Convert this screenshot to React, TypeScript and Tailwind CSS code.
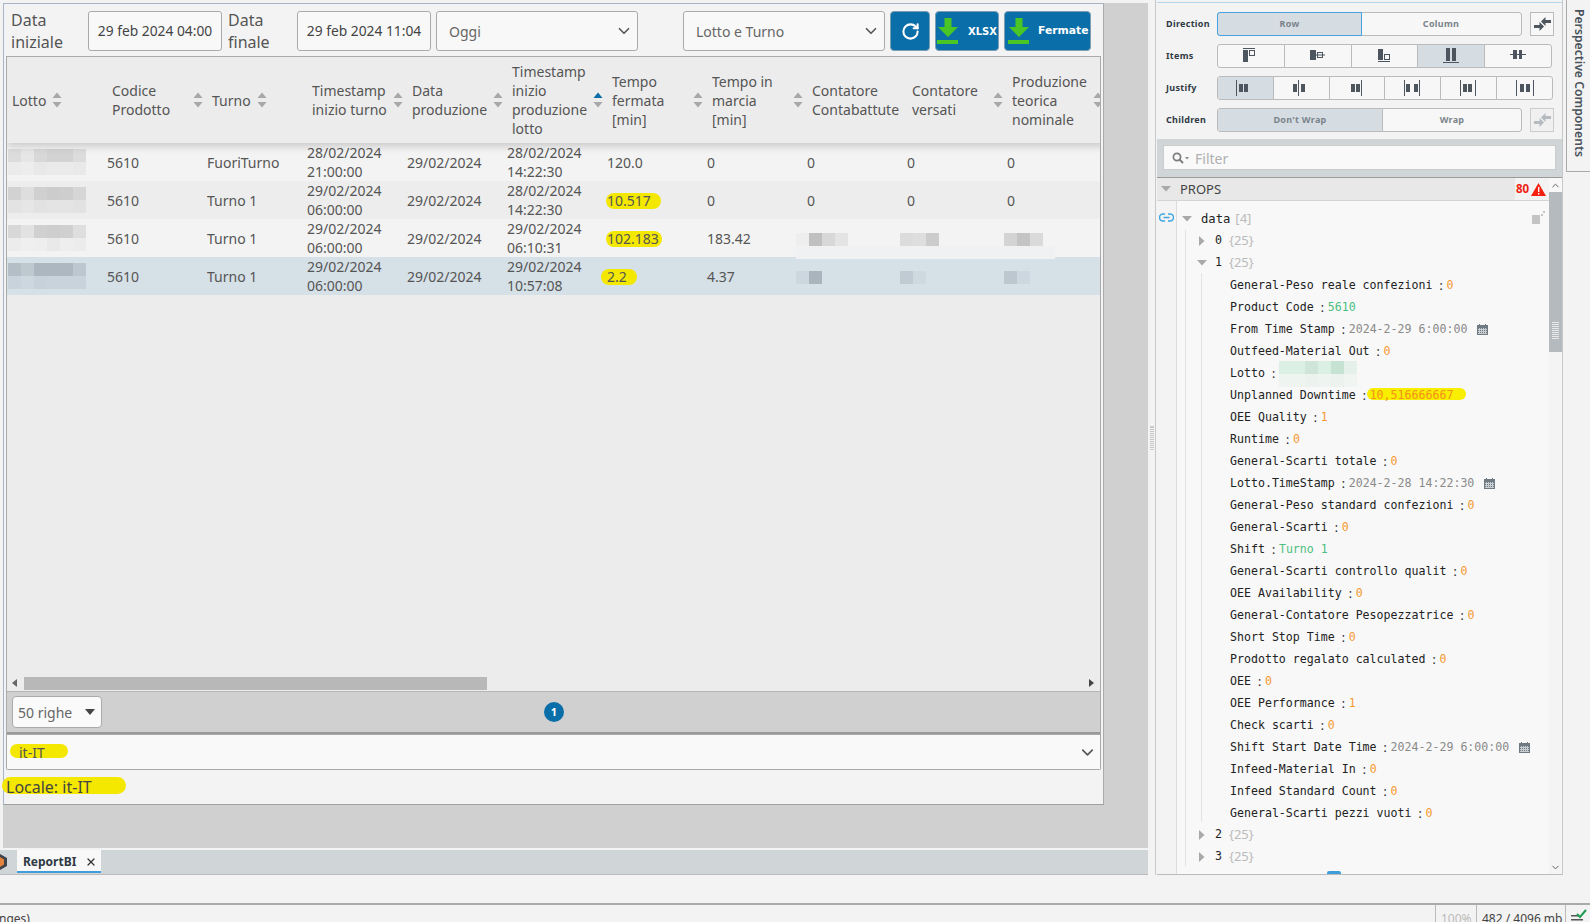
import { RotateCw, ChevronDown, ChevronUp, X } from 'lucide-react';

const COLUMNS = [
  { label: 'Lotto', sort: true },
  { label: 'Codice Prodotto', sort: true },
  { label: 'Turno', sort: true },
  { label: 'Timestamp inizio turno', sort: true },
  { label: 'Data produzione', sort: true },
  { label: 'Timestamp inizio produzione lotto', sort: true, active: true },
  { label: 'Tempo fermata [min]', sort: true },
  { label: 'Tempo in marcia [min]', sort: true },
  { label: 'Contatore Contabattute', sort: false },
  { label: 'Contatore versati', sort: true },
  { label: 'Produzione teorica nominale', sort: true },
];

const ROWS = [
  {
    bg: 'bg-[#f3f3f3]', turno: 'FuoriTurno', start: ['28/02/2024', '21:00:00'], lot: ['28/02/2024', '14:22:30'],
    fermata: '120.0', marcia: '0',
    mosaic: [['#dcdcdc', '#e6e6e6', '#d8d8d8', '#d3d3d3', '#d3d3d3', '#dcdcdc'], ['#ebebeb', '#ededed', '#e8e8e8', '#ebebeb', '#ebebeb', '#e9e9e9']],
  },
  {
    bg: 'bg-[#ededed]', turno: 'Turno 1', start: ['29/02/2024', '06:00:00'], lot: ['28/02/2024', '14:22:30'],
    fermata: '10.517', marcia: '0', mark: '-left-[1px] w-[55px]',
    mosaic: [['#d2d2d2', '#dedede', '#d0d0d0', '#cccccc', '#cecece', '#d6d6d6'], ['#e3e3e3', '#e6e6e6', '#e2e2e2', '#e4e4e4', '#e4e4e4', '#e2e2e2']],
  },
  {
    bg: 'bg-[#f3f3f3]', turno: 'Turno 1', start: ['29/02/2024', '06:00:00'], lot: ['29/02/2024', '06:10:31'],
    fermata: '102.183', marcia: '183.42', mark: '-left-[1px] w-[56px]',
    mosaic: [['#d8d8d8', '#e2e2e2', '#d0d0d0', '#cecece', '#d0d0d0', '#dedede'], ['#ececec', '#efefef', '#eeeeee', '#e9e9e9', '#eeeeee', '#ececec']],
  },
  {
    bg: 'bg-[#d5e0e7]', turno: 'Turno 1', start: ['29/02/2024', '06:00:00'], lot: ['29/02/2024', '10:57:08'],
    fermata: '2.2', marcia: '4.37', mark: '-left-[6px] w-[36px]',
    mosaic: [['#b4bec6', '#bec8cf', '#adb7bf', '#adb7bf', '#aeb8c0', '#bcc7cf'], ['#c8d3db', '#ccd7df', '#c6d1d9', '#c8d3db', '#c8d3db', '#c8d3db']],
  },
];

const COUNTERS_ROW3 = [
  { ml: '-ml-[11px]', cells: ['#eeeeee', '#c0c0c0', '#d8d8d8', '#e4e4e4'] },
  { ml: '-ml-[7px]', cells: ['#dcdcdc', '#dedede', '#cccccc'] },
  { ml: '-ml-[3px]', cells: ['#d4d4d4', '#c4c4c4', '#dadada'] },
];
const COUNTERS_ROW4 = [
  { ml: '-ml-[11px]', cells: ['#ccd7df', '#aab4bc'] },
  { ml: '-ml-[7px]', cells: ['#c0cbd3', '#cfd9e0'] },
  { ml: '-ml-[3px]', cells: ['#bcc7cf', '#ccd7df'] },
];

type TreeValue = { name: string; value: string; kind: 'num' | 'str' | 'date' | 'blur' | 'mark' };

const PROPS: TreeValue[] = [
  { name: 'General-Peso reale confezioni', value: '0', kind: 'num' },
  { name: 'Product Code', value: '5610', kind: 'str' },
  { name: 'From Time Stamp', value: '2024-2-29 6:00:00', kind: 'date' },
  { name: 'Outfeed-Material Out', value: '0', kind: 'num' },
  { name: 'Lotto', value: '', kind: 'blur' },
  { name: 'Unplanned Downtime', value: '10,516666667', kind: 'mark' },
  { name: 'OEE Quality', value: '1', kind: 'num' },
  { name: 'Runtime', value: '0', kind: 'num' },
  { name: 'General-Scarti totale', value: '0', kind: 'num' },
  { name: 'Lotto.TimeStamp', value: '2024-2-28 14:22:30', kind: 'date' },
  { name: 'General-Peso standard confezioni', value: '0', kind: 'num' },
  { name: 'General-Scarti', value: '0', kind: 'num' },
  { name: 'Shift', value: 'Turno 1', kind: 'str' },
  { name: 'General-Scarti controllo qualit', value: '0', kind: 'num' },
  { name: 'OEE Availability', value: '0', kind: 'num' },
  { name: 'General-Contatore Pesopezzatrice', value: '0', kind: 'num' },
  { name: 'Short Stop Time', value: '0', kind: 'num' },
  { name: 'Prodotto regalato calculated', value: '0', kind: 'num' },
  { name: 'OEE', value: '0', kind: 'num' },
  { name: 'OEE Performance', value: '1', kind: 'num' },
  { name: 'Check scarti', value: '0', kind: 'num' },
  { name: 'Shift Start Date Time', value: '2024-2-29 6:00:00', kind: 'date' },
  { name: 'Infeed-Material In', value: '0', kind: 'num' },
  { name: 'Infeed Standard Count', value: '0', kind: 'num' },
  { name: 'General-Scarti pezzi vuoti', value: '0', kind: 'num' },
];

function Mosaic({ rows, cell = 13 }: { rows: string[][]; cell?: number }) {
  return (
    <div className="flex flex-col">
      {rows.map((row, i) => (
        <div key={i} className="flex">
          {row.map((c, j) => (
            <div key={j} style={{ backgroundColor: c, width: cell, height: cell }} />
          ))}
        </div>
      ))}
    </div>
  );
}

function SortIcon({ active }: { active?: boolean }) {
  return (
    <svg width="10" height="16" viewBox="0 0 10 16" className="shrink-0">
      <path d="M5 0.5 L9.5 6 H0.5 Z" fill={active ? '#0b6ea6' : '#a8a8a8'} />
      <path d="M5 15.5 L9.5 10 H0.5 Z" fill="#a8a8a8" />
    </svg>
  );
}

function DownloadIcon() {
  return (
    <svg width="22" height="26" viewBox="0 0 22 26" className="shrink-0">
      <path d="M7.5 0 H14.5 V9 H21 L11 19 L1 9 H7.5 Z" fill="#4ac526" />
      <rect x="0" y="22" width="21" height="4" fill="#4ac526" />
    </svg>
  );
}

function SwapIcon({ dim }: { dim?: boolean }) {
  return (
    <svg width="17" height="14" viewBox="0 0 17 14" fill={dim ? '#b4babf' : '#4d565e'}>
      <path d="M7 4.5 L11.5 0 V3 H17 V6 H11.5 V9 Z" />
      <path d="M10 9.5 L5.5 5 V8 H0 V11 H5.5 V14 Z" />
    </svg>
  );
}

function ItemsIcon({ kind }: { kind: number }) {
  const c = '#4d565e';
  return (
    <svg width="20" height="16" viewBox="0 0 20 16">
      {kind === 0 && (
        <>
          <rect x="2" y="0" width="12" height="1" fill={c} />
          <rect x="2" y="2" width="5" height="12" fill={c} />
          <rect x="8.5" y="2.5" width="5" height="5" fill="none" stroke={c} />
        </>
      )}
      {kind === 1 && (
        <>
          <rect x="2" y="2" width="6" height="10" fill={c} />
          <rect x="9.5" y="4.5" width="5" height="5" fill="none" stroke={c} />
          <rect x="8" y="6.5" width="9" height="1" fill={c} />
        </>
      )}
      {kind === 2 && (
        <>
          <rect x="4" y="1" width="5" height="11" fill={c} />
          <rect x="10.5" y="6.5" width="5" height="5" fill="none" stroke={c} />
          <rect x="4" y="13" width="12" height="1" fill={c} />
        </>
      )}
      {kind === 3 && (
        <>
          <rect x="5" y="0" width="4" height="13" fill={c} />
          <rect x="11" y="0" width="4" height="13" fill={c} />
          <rect x="2" y="14" width="16" height="1" fill={c} />
        </>
      )}
      {kind === 4 && (
        <>
          <rect x="2" y="6" width="16" height="1" fill={c} />
          <rect x="5" y="2" width="4" height="9" fill={c} />
          <rect x="11" y="2" width="3" height="9" fill={c} />
        </>
      )}
    </svg>
  );
}

function JustifyIcon({ kind }: { kind: number }) {
  const c = '#4d565e';
  const layouts = [
    { lines: [1], bars: [4, 9] },
    { lines: [7], bars: [2, 10] },
    { lines: [14], bars: [4, 9] },
    { lines: [1, 16], bars: [3, 11] },
    { lines: [1, 16], bars: [4, 9] },
    { lines: [1, 18], bars: [5, 11] },
  ];
  const l = layouts[kind];
  return (
    <svg width="20" height="16" viewBox="0 0 20 16">
      {l.lines.map((x) => (
        <rect key={x} x={x} y="0" width="1" height="16" fill={c} />
      ))}
      {l.bars.map((x) => (
        <rect key={x} x={x} y="4" width="4" height="8" fill={c} />
      ))}
    </svg>
  );
}

function Calendar() {
  return (
    <svg width="11" height="11" viewBox="0 0 11 11" className="ml-[10px] shrink-0">
      <rect x="0" y="1" width="11" height="10" fill="#6f7a83" />
      <rect x="2" y="0" width="1" height="2" fill="#6f7a83" />
      <rect x="8" y="0" width="1" height="2" fill="#6f7a83" />
      <rect x="1" y="4" width="9" height="6" fill="#c9ced2" />
      {[1, 3, 5, 7, 9].map((x) =>
        [4, 6, 8].map((y) => <rect key={`${x}-${y}`} x={x} y={y} width="1" height="1" fill="#6f7a83" />)
      )}
    </svg>
  );
}

function TriDown({ className }: { className?: string }) {
  return (
    <svg width="10" height="6" viewBox="0 0 10 6" className={`shrink-0 ${className ?? ''}`}>
      <path d="M0 0 H10 L5 5.5 Z" fill="#a9a9a9" />
    </svg>
  );
}

function TriRight({ className }: { className?: string }) {
  return (
    <svg width="6" height="10" viewBox="0 0 6 10" className={`shrink-0 ${className ?? ''}`}>
      <path d="M0 0 V10 L5.5 5 Z" fill="#a9a9a9" />
    </svg>
  );
}

function HeaderCell({ label, sort, active }: { label: string; sort: boolean; active?: boolean }) {
  return (
    <div className="w-[100px] shrink-0 flex items-center pl-[5px] pr-[4px] overflow-hidden">
      <span className="leading-[19px] text-[14px] text-[#555]">{label}</span>
      {sort && <div className="ml-[6px] shrink-0"><SortIcon active={active} /></div>}
    </div>
  );
}

function BodyCell({ children }: { children: React.ReactNode }) {
  return <div className="w-[100px] shrink-0 text-[14px] leading-[19px] text-[#555]">{children}</div>;
}

export default function App() {
  return (
    <div
      className="w-[1590px] h-[922px] overflow-hidden flex flex-col bg-[#f3f3f3]"
      style={{ fontFamily: '"Noto Sans", sans-serif' }}
    >
      <div className="flex h-[903px] shrink-0">
        {/* Designer canvas */}
        <div className="w-[1148px] shrink-0 flex flex-col">
          <div className="h-[848px] shrink-0 bg-[#d0d0d0] flex flex-col">
            <div className="h-[3px] bg-[#f3f3f3] shrink-0" />
            <div className="flex-1 flex">
              <div className="w-[3px] bg-[#f3f3f3] shrink-0" />
              <div className="w-[1101px] h-fit shrink-0 border-l border-t border-r border-b border-[#a9b4c8] border-r-[#aaa] border-b-[#a0a0a0] bg-[#f3f3f3] flex flex-col">
                {/* Filters */}
                <div className="h-[52px] shrink-0 flex items-start pt-[7px] text-[#555]">
                  <div className="ml-[7px] w-[77px] text-[16px] leading-[22px] -mt-[2px] shrink-0">Data<br />iniziale</div>
                  <div className="w-[134px] h-[40px] pt-[1px] shrink-0 border border-[#aaa] rounded-[3px] bg-[#f8f8f8] flex items-center justify-center text-[13.8px] text-[#444]">29 feb 2024 04:00</div>
                  <div className="ml-[6px] w-[69px] text-[16px] leading-[22px] -mt-[2px] shrink-0">Data<br />finale</div>
                  <div className="w-[134px] h-[40px] pt-[1px] shrink-0 border border-[#aaa] rounded-[3px] bg-[#f8f8f8] flex items-center justify-center text-[13.8px] text-[#444]">29 feb 2024 11:04</div>
                  <div className="ml-[5px] w-[202px] h-[40px] shrink-0 border border-[#aaa] rounded-[3px] bg-[#f8f8f8] flex items-center justify-between pl-[12px] pr-[4px] text-[14px] text-[#666]">
                    Oggi
                    <ChevronDown size={18} strokeWidth={2.2} color="#555" />
                  </div>
                  <div className="ml-[45px] w-[202px] h-[40px] shrink-0 border border-[#aaa] rounded-[3px] bg-[#f8f8f8] flex items-center justify-between pl-[12px] pr-[4px] text-[14px] text-[#666]">
                    Lotto e Turno
                    <ChevronDown size={18} strokeWidth={2.2} color="#555" />
                  </div>
                  <div className="ml-[5px] w-[40px] h-[40px] shrink-0 rounded-[4px] border border-[#7c9db3] bg-[#0a6ea8] flex items-center justify-center">
                    <RotateCw size={19} strokeWidth={2.6} color="#fff" />
                  </div>
                  <div className="ml-[5px] w-[64px] h-[40px] shrink-0 rounded-[4px] border border-[#7c9db3] bg-[#0a6ea8] flex items-center pl-[1px] text-[#fff]">
                    <DownloadIcon />
                    <span className="ml-[9px] pt-[1px] font-bold text-[10px]" style={{ fontFamily: '"DejaVu Sans", sans-serif' }}>XLSX</span>
                  </div>
                  <div className="ml-[5px] w-[87px] h-[40px] shrink-0 rounded-[4px] border border-[#7c9db3] bg-[#0a6ea8] flex items-center pl-[3px] text-[#fff]">
                    <DownloadIcon />
                    <span className="ml-[8px] pt-[1px] font-bold text-[10.8px]" style={{ fontFamily: '"DejaVu Sans", sans-serif' }}>Fermate</span>
                  </div>
                </div>

                {/* Table */}
                <div className="ml-[2px] w-[1095px] h-[679px] shrink-0 border border-[#aaa] bg-[#ececec] flex flex-col overflow-hidden">
                  <div className="h-[86px] shrink-0 flex w-[1100px] relative z-10 shadow-[0_3px_8px_rgba(0,0,0,0.18)] bg-[#ececec]">
                    {COLUMNS.map((c) => (
                      <HeaderCell key={c.label} label={c.label} sort={c.sort} active={c.active} />
                    ))}
                  </div>
                  <div className="h-[152px] shrink-0 flex flex-col">
                    {ROWS.map((r, i) => (
                      <div key={i} className={`h-[38px] shrink-0 flex items-center w-[1100px] relative ${r.bg}`}>
                        <BodyCell>
                          <div className="ml-[1px]"><Mosaic rows={r.mosaic} /></div>
                        </BodyCell>
                        <BodyCell>5610</BodyCell>
                        <BodyCell>{r.turno}</BodyCell>
                        <BodyCell>{r.start[0]}<br />{r.start[1]}</BodyCell>
                        <BodyCell>29/02/2024</BodyCell>
                        <BodyCell>{r.lot[0]}<br />{r.lot[1]}</BodyCell>
                        <BodyCell>
                          <span className="relative inline-block">
                            {r.mark && (
                              <span className={`absolute top-[2px] bottom-[1px] rounded-full bg-[#f4e800] ${r.mark}`} />
                            )}
                            <span className="relative">{r.fermata}</span>
                          </span>
                        </BodyCell>
                        <BodyCell>{r.marcia}</BodyCell>
                        {i < 2 && (
                          <>
                            <BodyCell>0</BodyCell>
                            <BodyCell>0</BodyCell>
                            <BodyCell>0</BodyCell>
                          </>
                        )}
                        {i === 2 &&
                          COUNTERS_ROW3.map((m) => (
                            <BodyCell key={m.ml}>
                              <div className={`${m.ml} pt-[3px]`}>
                                <Mosaic rows={[m.cells]} />
                              </div>
                            </BodyCell>
                          ))}
                        {i === 3 &&
                          COUNTERS_ROW4.map((m) => (
                            <BodyCell key={m.ml}>
                              <div className={`${m.ml} pt-[3px]`}>
                                <Mosaic rows={[m.cells]} />
                              </div>
                            </BodyCell>
                          ))}
                        {i === 2 && <div className="absolute left-[789px] top-[27px] w-[259px] h-[13px] z-[1] bg-[#f0f1f3]" />}
                      </div>
                    ))}
                  </div>
                  <div className="flex-1" />
                  {/* Horizontal scrollbar */}
                  <div className="h-[14px] shrink-0 flex items-center">
                    <svg width="6" height="8" viewBox="0 0 6 8" className="ml-[5px] shrink-0"><path d="M5 0 V8 L0 4 Z" fill="#666" /></svg>
                    <div className="ml-[6px] w-[463px] h-[13px] bg-[#b8b8b8]" />
                    <div className="flex-1" />
                    <svg width="6" height="8" viewBox="0 0 6 8" className="mr-[5px] shrink-0"><path d="M0 0 V8 L5 4 Z" fill="#444" /></svg>
                  </div>
                  {/* Pager */}
                  <div className="h-[43px] shrink-0 mt-[1px] border-t border-[#b5b5b5] border-b-2 border-b-[#999] bg-[#d0d0d0] flex items-center relative">
                    <div className="ml-[5px] w-[90px] h-[32px] bg-[#fafafa] border border-[#aaa] rounded-[4px] flex items-center justify-between pl-[5px] pr-[6px] text-[14px] text-[#666]">
                      50 righe
                      <svg width="10" height="6" viewBox="0 0 10 6"><path d="M0 0 H10 L5 6 Z" fill="#444" /></svg>
                    </div>
                    <div className="ml-[442px] w-[20px] h-[20px] rounded-full bg-[#0a6ea8] text-[#fff] text-[11px] font-bold flex items-center justify-center">1</div>
                  </div>
                </div>

                {/* Locale dropdown */}
                <div className="ml-[2px] w-[1095px] h-[35px] pt-[1px] shrink-0 border border-[#aaa] border-t-0 rounded-b-[2px] bg-[#f9f9f9] flex items-center justify-between pl-[12px] pr-[3px] text-[14px] text-[#555]">
                  <span className="relative">
                    <span className="absolute -left-[9px] top-[2px] w-[58px] h-[14px] rounded-full bg-[#f4e800]" />
                    <span className="relative">it-IT</span>
                  </span>
                  <ChevronDown size={19} strokeWidth={2} color="#555" />
                </div>
                <div className="h-[34px] pb-[1px] shrink-0 flex items-center pl-[2px] text-[16px] text-[#444]">
                  <span className="relative">
                    <span className="absolute -left-[4px] top-[2px] w-[124px] h-[17px] rounded-full bg-[#f4e800]" />
                    <span className="relative">Locale: it-IT</span>
                  </span>
                </div>
              </div>
            </div>
          </div>
          {/* Tab strip */}
          <div className="h-[27px] shrink-0 bg-[#d0d5d8] border-t-2 border-t-[#f3f3f3] border-b border-b-[#bbb] flex items-start">
            <div className="w-[17px] h-[23px] flex items-center overflow-hidden shrink-0">
              <svg width="16" height="16" viewBox="0 0 16 16" className="-ml-[8px] shrink-0">
                <path d="M8 0 L15 4 V12 L8 16 L1 12 V4 Z" fill="#3f444a" />
                <path d="M8 3 L12 5.5 V10.5 L8 13 Z" fill="#e4843a" />
              </svg>
            </div>
            <div className="w-[84px] h-[23px] bg-[#f8f8f8] border-b-2 border-b-[#3f9ddc] flex items-center pl-[6px] shrink-0">
              <span className="text-[12px] font-bold text-[#2f3a44] w-[62px] pt-[2px]">ReportBI</span>
              <X size={12} strokeWidth={2.4} color="#333" className="mt-[2px]" />
            </div>
          </div>
        </div>

        {/* Splitter */}
        <div className="w-[7px] shrink-0 h-[875px] flex items-center justify-center">
          <div className="w-[4px] h-[24px] border-y border-[#ccc] bg-[repeating-linear-gradient(#c4c4c4_0,#c4c4c4_1px,transparent_1px,transparent_2px)]" />
        </div>

        {/* Property editor */}
        <div className="w-[408px] h-[875px] shrink-0 border-l border-r border-[#c8c8c8] pl-[1px] flex flex-col bg-[#f3f3f3] overflow-hidden">
          <div className="h-[139px] shrink-0 pt-[2px] flex flex-col">
            <div className="h-[1px] bg-[#b5d5ec] shrink-0" />
            <div className="pt-[9px] flex flex-col gap-[8px]">
              <div className="flex items-center h-[24px]">
                <span className="ml-[9px] w-[51px] text-[9px] font-bold tracking-[0.3px] text-[#2f3a44]">Direction</span>
                <div className="w-[305px] h-[24px] flex border border-[#bbb] rounded-[3px] text-[9px] font-bold tracking-[0.3px] text-[#7b848b] bg-[#f7f7f7]">
                  <div className="w-[145px] bg-[#d5dce2] border border-[#45a2e0] -m-[1px] rounded-l-[3px] flex items-center justify-center">Row</div>
                  <div className="flex-1 flex items-center justify-center">Column</div>
                </div>
                <div className="ml-[8px] w-[24px] h-[24px] border border-[#bbb] bg-[#f7f7f7] flex items-center justify-center"><SwapIcon /></div>
              </div>
              <div className="flex items-center h-[24px]">
                <span className="ml-[9px] w-[51px] text-[9px] font-bold tracking-[0.3px] text-[#2f3a44]">Items</span>
                <div className="w-[335px] h-[24px] flex border border-[#bbb] rounded-[3px] overflow-hidden bg-[#f7f7f7]">
                  {[0, 1, 2, 3, 4].map((k) => (
                    <div key={k} className={`flex-1 flex items-center justify-center border-r border-[#bbb] last:border-r-0 ${k === 3 ? 'bg-[#d5dce2]' : ''}`}>
                      <ItemsIcon kind={k} />
                    </div>
                  ))}
                </div>
              </div>
              <div className="flex items-center h-[24px]">
                <span className="ml-[9px] w-[51px] text-[9px] font-bold tracking-[0.3px] text-[#2f3a44]">Justify</span>
                <div className="w-[336px] h-[24px] flex border border-[#bbb] rounded-[3px] overflow-hidden bg-[#f7f7f7]">
                  {[0, 1, 2, 3, 4, 5].map((k) => (
                    <div key={k} className={`flex-1 flex items-center justify-center border-r border-[#bbb] last:border-r-0 ${k === 0 ? 'bg-[#d5dce2]' : ''}`}>
                      <JustifyIcon kind={k} />
                    </div>
                  ))}
                </div>
              </div>
              <div className="flex items-center h-[24px]">
                <span className="ml-[9px] w-[51px] text-[9px] font-bold tracking-[0.3px] text-[#2f3a44]">Children</span>
                <div className="w-[305px] h-[24px] flex border border-[#bbb] rounded-[3px] overflow-hidden text-[9px] font-bold tracking-[0.3px] text-[#7b848b] bg-[#f7f7f7]">
                  <div className="w-[165px] bg-[#d5dce2] border-r border-[#bbb] flex items-center justify-center">Don't Wrap</div>
                  <div className="flex-1 flex items-center justify-center">Wrap</div>
                </div>
                <div className="ml-[8px] w-[24px] h-[24px] border border-[#ccc] bg-[#f0f0f0] flex items-center justify-center"><SwapIcon dim /></div>
              </div>
            </div>
          </div>

          {/* Filter band */}
          <div className="h-[39px] shrink-0 bg-[#d0d5d8] border-b border-[#999] pt-[6px] pl-[6px]">
            <div className="w-[393px] h-[25px] pt-[1px] bg-[#f9f9f9] border border-[#ccc] flex items-center pl-[8px] text-[14px] text-[#b0b0b0]">
              <svg width="18" height="12" viewBox="0 0 18 12" className="mr-[5px]">
                <circle cx="5" cy="5" r="3.6" fill="none" stroke="#7d7d7d" strokeWidth="1.7" />
                <path d="M7.5 7.5 L11 11" stroke="#7d7d7d" strokeWidth="2" />
                <path d="M13 5 H17 L15 7.5 Z" fill="#8a8a8a" />
              </svg>
              Filter
            </div>
          </div>

          {/* Props */}
          <div className="flex-1 flex min-h-0">
            <div className="w-[392px] shrink-0 flex flex-col border-b border-[#bbb]">
              <div className="h-[23px] shrink-0 bg-[#e8e8e8] border-b border-[#d4d4d4] flex items-center text-[13px] text-[#444]">
                <TriDown className="ml-[4px]" />
                <span className="ml-[9px] pt-[2px]">PROPS</span>
                <span className="ml-auto w-[34px] h-full bg-[#f3f3f3] flex items-center pl-[1px]">
                  <span className="text-[11.5px] font-bold text-[#f01d10]">80</span>
                  <svg width="15" height="13" viewBox="0 0 15 13" className="ml-[2px]">
                    <path d="M7.5 0 L15 13 H0 Z" fill="#f5200f" />
                    <rect x="7" y="4" width="1.4" height="5" fill="#fff" />
                    <rect x="7" y="10" width="1.4" height="1.5" fill="#fff" />
                  </svg>
                </span>
              </div>
              <div className="flex-1 flex relative bg-[#f8f8f8] overflow-hidden">
                <div className="w-[20px] shrink-0 bg-[#f3f3f3] border-r border-[#ddd] pt-[12px] pl-[2px]">
                  <svg width="15" height="9" viewBox="0 0 15 9" fill="none" stroke="#3ea6e2" strokeWidth="1.5">
                    <path d="M6 1 H4 A3.5 3.5 0 0 0 4 8 H6" />
                    <path d="M9 1 H11 A3.5 3.5 0 0 1 11 8 H9" />
                    <path d="M4.5 4.5 H10.5" />
                  </svg>
                </div>
                {/* guide lines of the tree */}
                <div className="absolute left-[28px] top-[29px] bottom-[8px] w-[1px] bg-[#e4e4e4]" />
                <div className="absolute left-[44px] top-[72px] h-[549px] w-[1px] bg-[#e4e4e4]" />
                <svg width="13" height="13" viewBox="0 0 13 13" className="absolute right-[4px] top-[10px]" fill="#c4c4c4">
                  <path d="M0 4 H8 V13 H0 Z" />
                  <rect x="9" y="3" width="2" height="2" />
                  <rect x="11" y="0" width="2" height="2" />
                </svg>
                <div className="flex-1 pt-[7px] font-normal text-[11.6px] text-[#222]" style={{ fontFamily: '"DejaVu Sans Mono", monospace' }}>
                  <div className="h-[22px] flex items-center pl-[5px]">
                    <TriDown />
                    <span className="ml-[9px] text-[12.2px]">data</span>
                    <span className="ml-[5px] text-[#bbb] text-[13px]" style={{ fontFamily: '"Noto Sans", sans-serif' }}>[4]</span>
                  </div>
                  <div className="h-[22px] flex items-center pl-[22px]">
                    <TriRight />
                    <span className="ml-[10px]">0</span>
                    <span className="ml-[7px] text-[#bbb] text-[13px]" style={{ fontFamily: '"Noto Sans", sans-serif' }}>{'{25}'}</span>
                  </div>
                  <div className="h-[22px] flex items-center pl-[20px]">
                    <TriDown />
                    <span className="ml-[8px]">1</span>
                    <span className="ml-[7px] text-[#bbb] text-[13px]" style={{ fontFamily: '"Noto Sans", sans-serif' }}>{'{25}'}</span>
                  </div>
                  {PROPS.map((p) => (
                    <div key={p.name} className="h-[22px] pt-[1px] flex items-center pl-[53px] whitespace-pre">
                      <span>{p.name}</span>
                      <span className="w-[14px] shrink-0 pl-[7px] text-[12px]" style={{ fontFamily: '"Noto Sans", sans-serif' }}>:</span>
                      {p.kind === 'num' && <span className="text-[#f59a33]">{p.value}</span>}
                      {p.kind === 'str' && <span className="text-[#4cbf7f]">{p.value}</span>}
                      {p.kind === 'date' && (
                        <>
                          <span className="text-[#8a8a8a]">{p.value}</span>
                          <Calendar />
                        </>
                      )}
                      {p.kind === 'blur' && (
                        <Mosaic rows={[
                          ['#dcefe5', '#dcefe5', '#cfe5d9', '#dcefe5', '#c6e2d3', '#e6f0eb'],
                          ['#eef5f1', '#eef5f1', '#ecf3ef', '#eef5f1', '#ecf3ef', '#f0f5f2'],
                        ]} />
                      )}
                      {p.kind === 'mark' && (
                        <span className="relative text-[#f5911e]">
                          <span className="absolute -left-[3px] top-[1px] w-[99px] h-[12px] rounded-full bg-[#f7ee00]" />
                          <span className="relative">{p.value}</span>
                        </span>
                      )}
                    </div>
                  ))}
                  <div className="h-[22px] flex items-center pl-[22px]">
                    <TriRight />
                    <span className="ml-[10px]">2</span>
                    <span className="ml-[7px] text-[#bbb] text-[13px]" style={{ fontFamily: '"Noto Sans", sans-serif' }}>{'{25}'}</span>
                  </div>
                  <div className="h-[22px] flex items-center pl-[22px]">
                    <TriRight />
                    <span className="ml-[10px]">3</span>
                    <span className="ml-[7px] text-[#bbb] text-[13px]" style={{ fontFamily: '"Noto Sans", sans-serif' }}>{'{25}'}</span>
                  </div>
                </div>
                <div className="absolute left-[170px] bottom-0 w-[14px] h-[3px] rounded-t-[2px] bg-[#3f9ddc]" />
              </div>
            </div>
            {/* Vertical scrollbar */}
            <div className="w-[13px] shrink-0 flex flex-col bg-[#f4f4f4] border-b border-[#bbb]">
              <div className="h-[14px] shrink-0 bg-[#f8f8f8] flex items-center justify-center"><ChevronUp size={11} strokeWidth={2} color="#555" /></div>
              <div className="h-[160px] shrink-0 bg-[#b5babf] flex flex-col justify-end items-center pb-[12px]">
                <div className="w-[7px] h-[18px] bg-[repeating-linear-gradient(#e8e8e8_0,#e8e8e8_1px,transparent_1px,transparent_2px)]" />
              </div>
              <div className="flex-1" />
              <div className="h-[14px] shrink-0 flex items-center justify-center"><ChevronDown size={11} strokeWidth={2} color="#555" /></div>
            </div>
          </div>
        </div>

        {/* Side tab */}
        <div className="w-[27px] shrink-0 pl-[3px]">
          <div className="w-[24px] h-[172px] border-l border-b border-[#aaa] flex items-start justify-center pt-[9px]">
            <span className="text-[12.2px] font-semibold text-[#4a535b] [writing-mode:vertical-rl] whitespace-nowrap">Perspective Components</span>
          </div>
        </div>
      </div>

      {/* Status bar */}
      <div className="h-[19px] shrink-0 border-t-2 border-[#aaa] flex items-start text-[12px] leading-[16px] text-[#444] overflow-hidden">
        <span className="mt-[6px] -ml-[1px]">nges)</span>
        <div className="flex-1" />
        <div className="w-[41px] h-full border-l border-[#bbb] pl-[5px] pt-[6px] text-[#bbb]">100%</div>
        <div className="w-[89px] h-full border-l border-[#bbb] pl-[5px] pt-[6px] whitespace-nowrap text-[#444]">482 / 4096 mb</div>
        <div className="w-[25px] h-full border-l border-[#bbb] pl-[5px] pt-[4px]">
          <svg width="16" height="14" viewBox="0 0 16 14">
            <rect x="0" y="6" width="8" height="1.5" fill="#555" />
            <rect x="0" y="10" width="12" height="1.5" fill="#555" />
            <path d="M6 5 L9 8 L15 1" fill="none" stroke="#1e9b52" strokeWidth="2" />
          </svg>
        </div>
      </div>
    </div>
  );
}
